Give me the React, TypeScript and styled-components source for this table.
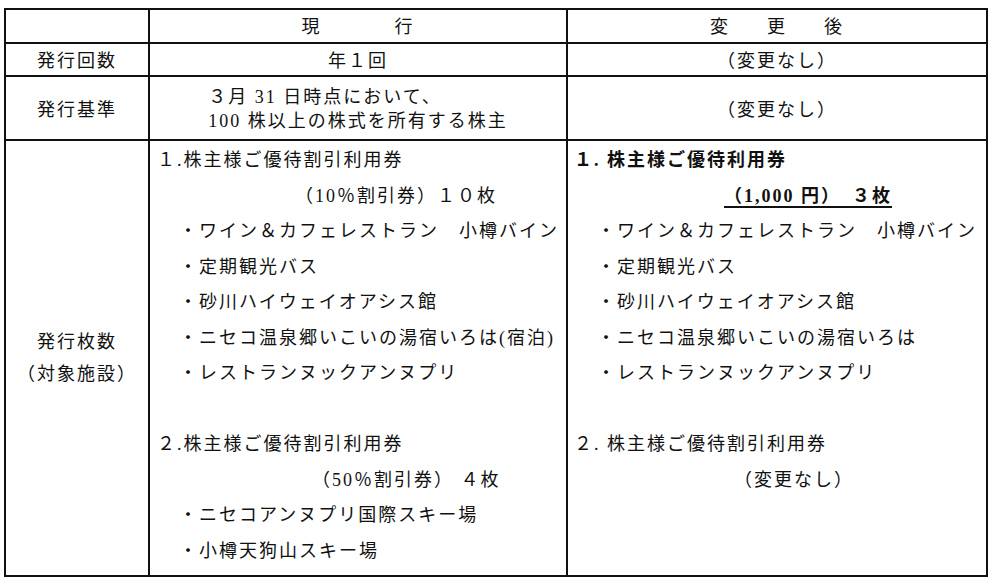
import React from 'react';
import styled, { createGlobalStyle } from 'styled-components';

const GlobalStyle = createGlobalStyle`
  html, body {
    margin: 0;
    padding: 0;
    background: #fff;
  }

  body {
    font-family: "Liberation Serif", "Noto Sans CJK JP", serif;
    color: #111;
  }
`;

const Page = styled.div`
  padding: 8px 0 0 4px;
`;

const Table = styled.table`
  border-collapse: collapse;
  table-layout: fixed;
  width: 982px;
  font-size: 18px;
  letter-spacing: 2px;
  line-height: 20px;
`;

const Cell = styled.td<{ $align?: 'left' | 'center'; $height?: number }>`
  border: 2px solid #111;
  padding: 0;
  height: ${({ $height }) => ($height ? `${$height}px` : 'auto')};
  text-align: ${({ $align }) => $align || 'center'};
  vertical-align: middle;
`;

const Spread = styled.div<{ $gap: number }>`
  display: flex;
  justify-content: center;
  gap: ${({ $gap }) => $gap}px;
  padding-top: 1px;
`;

const Label = styled.div`
  padding-top: 3px;
`;

const StackLabel = styled.div`
  line-height: 32px;
`;

const Criteria = styled.div`
  display: inline-block;
  text-align: left;
  line-height: 24px;
  padding-top: 2px;
`;

const ListCell = styled(Cell)<{ $pad?: number }>`
  vertical-align: top;
  text-align: left;
  padding: 2px 0 0 ${({ $pad }) => $pad ?? 7}px;
`;

const Line = styled.div<{ $indent?: number; $bold?: boolean }>`
  line-height: 35.5px;
  height: 35.5px;
  white-space: nowrap;
  padding-left: ${({ $indent }) => $indent || 0}px;
  font-weight: ${({ $bold }) => ($bold ? 700 : 400)};
`;

const Underlined = styled.span`
  text-decoration: underline;
  text-decoration-thickness: 2px;
  text-underline-offset: 4px;
`;

const currentItems = [
  'ワイン＆カフェレストラン　小樽バイン',
  '定期観光バス',
  '砂川ハイウェイオアシス館',
  'ニセコ温泉郷いこいの湯宿いろは(宿泊)',
  'レストランヌックアンヌプリ',
];

const nextItems = [
  'ワイン＆カフェレストラン　小樽バイン',
  '定期観光バス',
  '砂川ハイウェイオアシス館',
  'ニセコ温泉郷いこいの湯宿いろは',
  'レストランヌックアンヌプリ',
];

const App: React.FC = () => {
  return (
    <Page>
      <GlobalStyle />
      <Table>
        <colgroup>
          <col style={{ width: 144 }} />
          <col style={{ width: 418 }} />
          <col style={{ width: 420 }} />
        </colgroup>
        <tbody>
          <tr>
            <Cell $height={32} />
            <Cell $height={32}>
              <Spread $gap={73}>
                <span>現</span>
                <span>行</span>
              </Spread>
            </Cell>
            <Cell $height={32}>
              <Spread $gap={37}>
                <span>変</span>
                <span>更</span>
                <span>後</span>
              </Spread>
            </Cell>
          </tr>

          <tr>
            <Cell $height={31}>
              <Label>発行回数</Label>
            </Cell>
            <Cell $height={31}>
              <Label>年１回</Label>
            </Cell>
            <Cell $height={31}>
              <Label>（変更なし）</Label>
            </Cell>
          </tr>

          <tr>
            <Cell $height={62}>
              <Label>発行基準</Label>
            </Cell>
            <Cell $height={62}>
              <Criteria>
                ３月 31 日時点において、
                <br />
                100 株以上の株式を所有する株主
              </Criteria>
            </Cell>
            <Cell $height={62}>
              <Label>（変更なし）</Label>
            </Cell>
          </tr>

          <tr>
            <Cell $height={434}>
              <StackLabel>
                発行枚数
                <br />
                （対象施設）
              </StackLabel>
            </Cell>

            <ListCell>
              <Line>１.株主様ご優待割引利用券</Line>
              <Line $indent={138}>（10％割引券）１０枚</Line>
              {currentItems.map((item) => (
                <Line key={item} $indent={22}>・{item}</Line>
              ))}
              <Line>&nbsp;</Line>
              <Line>２.株主様ご優待割引利用券</Line>
              <Line $indent={155}>（50％割引券） ４枚</Line>
              <Line $indent={22}>・ニセコアンヌプリ国際スキー場</Line>
              <Line $indent={22}>・小樽天狗山スキー場</Line>
            </ListCell>

            <ListCell $pad={6}>
              <Line $bold>１. 株主様ご優待利用券</Line>
              <Line $indent={150} $bold>
                <Underlined>（1,000 円）　３枚</Underlined>
              </Line>
              {nextItems.map((item) => (
                <Line key={item} $indent={23}>・{item}</Line>
              ))}
              <Line>&nbsp;</Line>
              <Line>２. 株主様ご優待割引利用券</Line>
              <Line $indent={160}>（変更なし）</Line>
            </ListCell>
          </tr>
        </tbody>
      </Table>
    </Page>
  );
};

export default App;
